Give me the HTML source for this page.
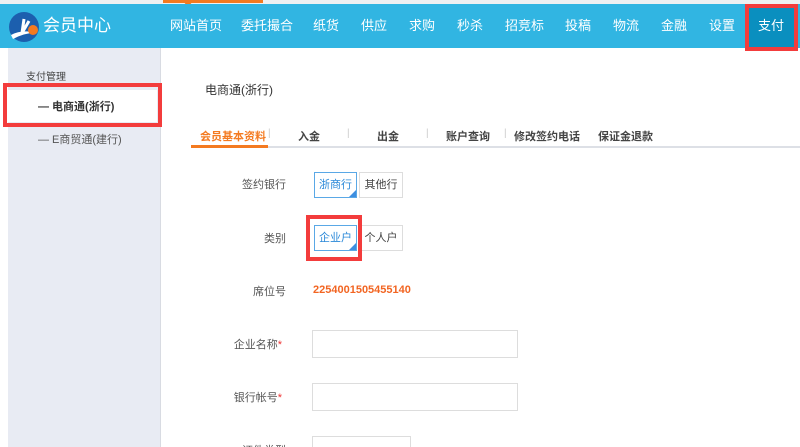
<!DOCTYPE html>
<html><head><meta charset="utf-8"><style>
*{margin:0;padding:0;box-sizing:border-box}
html,body{width:800px;height:447px;overflow:hidden}
body{background:#fff;font-family:"Liberation Sans","Noto Sans CJK SC",sans-serif;position:relative;color:#555}
.abs{position:absolute}
.top{left:0;top:0;width:800px;height:4px;background:#eef0f2}
.hdr{left:0;top:4px;width:800px;height:44px;background:#31b5e2}
.nav{top:4px;height:44px;line-height:44px;color:#fff;font-size:13px}
.side{left:8px;top:48px;width:153px;height:399px;background:#e8ebf3;border-right:1px solid #d8dbe2}
.red{border:4px solid #f33c3c}
.lbl{font-size:11px;color:#555;text-align:right;width:80px}
.inp{border:1px solid #ddd;background:#fff}
.btn{border:1px solid #ddd;font-size:11px;text-align:center;background:#fff}
.sel{border:1px solid #5aa8e6;color:#2a88d8}
.tri{position:absolute;right:0;bottom:0;width:0;height:0;border-left:7px solid transparent;border-bottom:7px solid #3d8ee0}
.tab{top:128px;font-size:11px;color:#444;font-weight:bold}
</style></head><body>
<div class="abs top"></div>
<div class="abs" style="left:163px;top:0;width:100px;height:3px;background:#f47a20"></div>
<div class="abs" style="left:182px;top:0;width:0;height:0;border-left:6px solid transparent;border-right:6px solid transparent;border-top:7px solid #f47a20"></div>
<div class="abs hdr"></div>
<svg class="abs" style="left:8px;top:11px" width="34" height="34" viewBox="0 0 34 34"><circle cx="16" cy="16" r="15" fill="#1c5fae"/><path d="M3 24 Q14 18 30 22 Q18 21 5 28Z" fill="#fff"/><path d="M16 8 L14 22 L21 10" stroke="#fff" stroke-width="3" fill="none"/><circle cx="25" cy="19" r="5" fill="#f47a20"/></svg>
<div class="abs nav" style="left:43px;font-size:17px">会员中心</div>
<div class="abs nav" style="left:170px">网站首页</div>
<div class="abs nav" style="left:241px">委托撮合</div>
<div class="abs nav" style="left:313px">纸货</div>
<div class="abs nav" style="left:361px">供应</div>
<div class="abs nav" style="left:409px">求购</div>
<div class="abs nav" style="left:457px">秒杀</div>
<div class="abs nav" style="left:505px">招竞标</div>
<div class="abs nav" style="left:565px">投稿</div>
<div class="abs nav" style="left:613px">物流</div>
<div class="abs nav" style="left:661px">金融</div>
<div class="abs nav" style="left:709px">设置</div>
<div class="abs" style="left:749px;top:8px;width:46px;height:40px;background:#0a8fbf"></div>
<div class="abs nav" style="left:758px">支付</div>
<div class="abs red" style="left:745px;top:4px;width:53px;height:47px"></div>

<div class="abs side"></div>
<div class="abs" style="left:26px;top:68px;font-size:10px;color:#444">支付管理</div>
<div class="abs" style="left:8px;top:90px;width:149px;height:32px;background:#fff"></div>
<div class="abs" style="left:38px;top:98px;font-size:11px;color:#333;font-weight:bold">— 电商通(浙行)</div>
<div class="abs red" style="left:3px;top:83px;width:159px;height:44px"></div>
<div class="abs" style="left:38px;top:131px;font-size:11px;color:#555">— E商贸通(建行)</div>

<div class="abs" style="left:205px;top:81px;font-size:12px;color:#333">电商通(浙行)</div>
<div class="abs" style="left:191px;top:146px;width:609px;height:2px;background:#dde0e6"></div>
<div class="abs" style="left:191px;top:145px;width:77px;height:3px;background:#f47a20"></div>
<div class="abs tab" style="left:200px;color:#f47a20">会员基本资料</div>
<div class="abs tab" style="left:298px">入金</div>
<div class="abs tab" style="left:377px">出金</div>
<div class="abs tab" style="left:446px">账户查询</div>
<div class="abs tab" style="left:514px">修改签约电话</div>
<div class="abs tab" style="left:598px">保证金退款</div>
<div class="abs" style="left:268px;top:128px;font-size:10px;color:#ccc">|</div>
<div class="abs" style="left:347px;top:128px;font-size:10px;color:#ccc">|</div>
<div class="abs" style="left:426px;top:128px;font-size:10px;color:#ccc">|</div>
<div class="abs" style="left:504px;top:128px;font-size:10px;color:#ccc">|</div>

<div class="abs lbl" style="left:206px;top:176px">签约银行</div>
<div class="abs btn sel" style="left:314px;top:172px;width:43px;height:26px;line-height:24px">浙商行<span class="tri"></span></div>
<div class="abs btn" style="left:359px;top:172px;width:44px;height:26px;line-height:24px;color:#444">其他行</div>

<div class="abs lbl" style="left:206px;top:230px">类别</div>
<div class="abs btn sel" style="left:314px;top:225px;width:43px;height:26px;line-height:24px">企业户<span class="tri"></span></div>
<div class="abs btn" style="left:359px;top:225px;width:44px;height:26px;line-height:24px;color:#444">个人户</div>
<div class="abs red" style="left:306px;top:215px;width:56px;height:46px"></div>

<div class="abs lbl" style="left:206px;top:283px">席位号</div>
<div class="abs" style="left:313px;top:284px;font-size:11px;color:#f26522;font-weight:bold">2254001505455140</div>

<div class="abs lbl" style="left:202px;top:336px">企业名称<span style="color:#e33">*</span></div>
<div class="abs inp" style="left:312px;top:330px;width:206px;height:28px"></div>
<div class="abs lbl" style="left:202px;top:389px">银行帐号<span style="color:#e33">*</span></div>
<div class="abs inp" style="left:312px;top:383px;width:206px;height:28px"></div>
<div class="abs lbl" style="left:206px;top:442px">证件类型</div>
<div class="abs inp" style="left:312px;top:436px;width:99px;height:28px"></div>
</body></html>
